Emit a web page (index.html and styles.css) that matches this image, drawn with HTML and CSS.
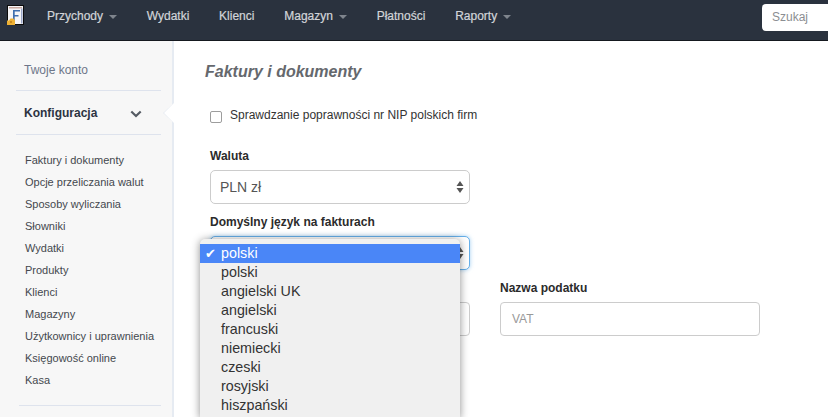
FILE: index.html
```html
<!DOCTYPE html>
<html lang="pl">
<head>
<meta charset="utf-8">
<title>Faktury i dokumenty</title>
<link rel="stylesheet" href="styles.css">
</head>
<body>
<header class="topbar">
  <a class="logo" href="#">
    <svg width="26" height="26" viewBox="0 0 26 26" aria-hidden="true">
      <rect x="3.500" y="2.500" width="16" height="19" fill="#f6f6f8" stroke="#0c0c0c"/>
      <rect x="5" y="4" width="13" height="1.500" fill="#c9a9a0"/>
      <rect x="17" y="5.500" width="1.500" height="15" fill="#9aa6c8"/>
      <rect x="9" y="7" width="7" height="1.500" fill="#3f6fb0"/>
      <rect x="9" y="7" width="1.700" height="11" fill="#3f6fb0"/>
      <rect x="9" y="12" width="5.500" height="1.500" fill="#3f6fb0"/>
      <path d="M3 22v-4.500h2l1.500-2h3l1.500 2V22z" fill="#eeb134"/>
      <path d="M6 18h2v2H6z" fill="#c98a1e"/>
    </svg>
  </a>
  <nav class="nav">
    <a class="nav-item caret" href="#">Przychody</a>
    <a class="nav-item" href="#">Wydatki</a>
    <a class="nav-item" href="#">Klienci</a>
    <a class="nav-item caret" href="#">Magazyn</a>
    <a class="nav-item" href="#">Płatności</a>
    <a class="nav-item caret" href="#">Raporty</a>
  </nav>
  <div class="search">Szukaj</div>
</header>
<div class="layout">
  <aside class="sidebar">
    <a class="side-top" href="#">Twoje konto</a>
    <div class="side-head">
      <span>Konfiguracja</span>
      <svg class="chev" width="12" height="8" viewBox="0 0 12 8" aria-hidden="true"><path d="M1.300 1.500 6 6l4.700-4.500" fill="none" stroke="#555b63" stroke-width="2.200"/></svg>
    </div>
    <ul class="side-list">
      <li>Faktury i dokumenty</li>
      <li>Opcje przeliczania walut</li>
      <li>Sposoby wyliczania</li>
      <li>Słowniki</li>
      <li>Wydatki</li>
      <li>Produkty</li>
      <li>Klienci</li>
      <li>Magazyny</li>
      <li>Użytkownicy i uprawnienia</li>
      <li>Księgowość online</li>
      <li>Kasa</li>
    </ul>
    <div class="side-rule"></div>
    <span class="notch"></span>
  </aside>
  <main class="main">
    <h1 class="title">Faktury i dokumenty</h1>
    <label class="check"><span class="box"></span>Sprawdzanie poprawności nr NIP polskich firm</label>
    <div class="field">
      <div class="label">Waluta</div>
      <div class="select">PLN zł<svg class="updown" width="8" height="12" viewBox="0 0 8 12" aria-hidden="true"><path d="M4 0l3.500 5H.5zM4 12 .5 7h7z" fill="#555"/></svg></div>
    </div>
    <div class="field lang">
      <div class="label">Domyślny język na fakturach</div>
      <div class="select focus"><svg class="updown" width="8" height="12" viewBox="0 0 8 12" aria-hidden="true"><path d="M4 0l3.500 5H.5zM4 12 .5 7h7z" fill="#555"/></svg></div>
      <ul class="popup">
        <li class="sel"><span class="tick">✔</span>polski</li>
        <li>polski</li>
        <li>angielski UK</li>
        <li>angielski</li>
        <li>francuski</li>
        <li>niemiecki</li>
        <li>czeski</li>
        <li>rosyjski</li>
        <li>hiszpański</li>
      </ul>
    </div>
    <div class="row">
      <div class="cell">
        <div class="label">&nbsp;</div>
        <div class="input"></div>
      </div>
      <div class="cell">
        <div class="label">Nazwa podatku</div>
        <div class="input ph">VAT</div>
      </div>
    </div>
  </main>
</div>
</body>
</html>
```
FILE: styles.css
```css
* { box-sizing: border-box; }
html, body { margin: 0; height: 417px; overflow: hidden; }
body { font-family: "Liberation Sans", Arial, sans-serif; color: #333; background: #fff; }
a { color: inherit; text-decoration: none; }
ul { list-style: none; margin: 0; padding: 0; }

.topbar {
  height: 41px;
  background: #2a323e;
  border-bottom: 1px solid #15191f;
  display: flex;
  align-items: center;
  padding-left: 4px;
}
.logo { display: flex; width: 26px; height: 26px; margin-top: -8px; }
.nav { display: flex; margin-left: 17px; gap: 29.750px; margin-top: -8px; }
.nav-item { font-size: 12px; color: #d2d5d9; -webkit-text-stroke: 0.2px #d2d5d9; line-height: 16px; display: flex; align-items: center; }
.caret::after {
  content: "";
  margin-left: 6px;
  margin-top: 1px;
  border-top: 4px solid #7f858d;
  border-left: 4px solid transparent;
  border-right: 4px solid transparent;
}
.search {
  margin-left: auto;
  margin-top: -6px;
  width: 68px;
  height: 27px;
  margin-right: -2px;
  background: #fff;
  border-radius: 4px 0 0 4px;
  font-size: 12px;
  color: #8b8e92;
  line-height: 27px;
  padding-left: 10px;
}

.layout { display: flex; height: 376px; overflow: hidden; }
.sidebar {
  position: relative;
  width: 174px;
  flex: none;
  background: #f7f7f7;
  border-right: 2px solid #e6ebf2;
  padding-left: 16px;
}
.side-top {
  display: block;
  height: 50px;
  width: 145px;
  border-bottom: 1px solid #dee3ed;
  padding: 21px 0 0 8px;
  font-size: 12px;
  line-height: 16px;
  color: #6d7689;
}
.side-head {
  width: 145px;
  height: 44px;
  border-bottom: 1px solid #dee3ed;
  padding: 0 19px 0 8px;
  display: flex;
  justify-content: space-between;
  align-items: center;
  font-size: 12px;
  font-weight: bold;
  color: #2c3342;
}
.chev { display: block; margin-top: 2px; }
.side-list { padding: 14px 0 0 9px; font-size: 11px; color: #44484e; }
.side-list li { height: 22px; line-height: 22px; white-space: nowrap; }
.side-rule { width: 142px; margin: 14px 0 0 3px; border-top: 1px solid #dee3ed; }
.notch {
  position: absolute;
  top: 62px;
  right: -2px;
  width: 0;
  height: 0;
  border-top: 10px solid transparent;
  border-bottom: 10px solid transparent;
  border-right: 11px solid #e4e9f0;
}
.notch::after {
  content: "";
  position: absolute;
  top: -10px;
  left: 1px;
  border-top: 10px solid transparent;
  border-bottom: 10px solid transparent;
  border-right: 10px solid #fff;
}

.main { flex: 1; padding: 21px 0 0 31px; position: relative; }
.title {
  margin: 0;
  font-size: 16px;
  line-height: 20px;
  font-weight: bold;
  font-style: italic;
  color: #65686d;
}
.check {
  display: flex;
  align-items: center;
  margin: 24px 0 0 5px;
  height: 18px;
  font-size: 12px;
  color: #333;
}
.box {
  width: 12px;
  height: 12px;
  margin: 4px 8px 0 0;
  background: #fff;
  border: 1px solid #9d9d9d;
  border-radius: 2px;
}
.field { margin: 24px 0 0 5px; width: 260px; position: relative; }
.lang { margin-top: 10px; }
.label { font-size: 12px; font-weight: bold; color: #2b2b2b; line-height: 16px; height: 16px; white-space: nowrap; }
.select {
  position: relative;
  margin-top: 6px;
  height: 34px;
  border: 1px solid #ccc;
  border-radius: 5px;
  background: #fff;
  padding-left: 9px;
  font-size: 14px;
  line-height: 32px;
  color: #555;
}
.select.focus { border-color: #66afe9; box-shadow: 0 0 4px rgba(102, 175, 233, 0.6); }
.updown { position: absolute; right: 5px; top: 10px; }
.popup {
  position: absolute;
  z-index: 5;
  left: -10px;
  top: 25px;
  width: 260px;
  height: 179px;
  padding-top: 5px;
  background: #f0f0f0;
  border-radius: 5px 5px 0 0;
  box-shadow: 0 1px 8px rgba(0, 0, 0, 0.45);
  font-size: 14.300px;
  color: #333;
}
.popup li { height: 19px; line-height: 19px; padding-left: 21px; position: relative; }
.popup .sel { background: #4a86f7; color: #fff; }
.tick { position: absolute; left: 5px; top: 0; font-size: 13px; font-family: "DejaVu Sans", sans-serif; }
.row { display: flex; gap: 30px; margin: 10px 0 0 5px; }
.cell { width: 260px; }
.input {
  margin-top: 6px;
  height: 34px;
  border: 1px solid #ccc;
  border-radius: 4px;
  background: #fff;
  padding-left: 11px;
  font-size: 12px;
  line-height: 32px;
  color: #999;
}
```
